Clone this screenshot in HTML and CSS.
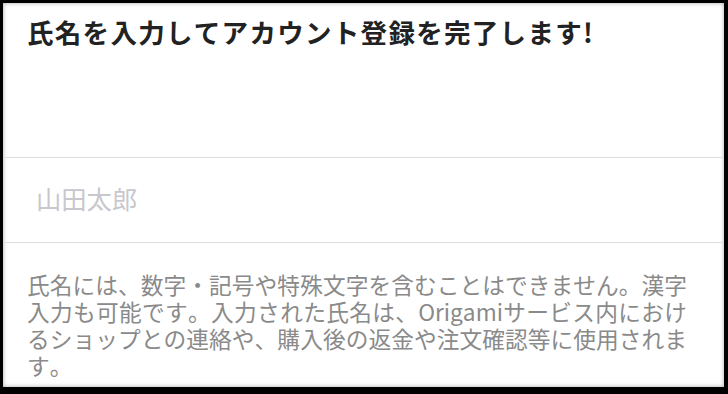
FILE: index.html
```html
<!DOCTYPE html>
<html lang="ja">
<head>
<meta charset="utf-8">
<title>氏名入力</title>
<link rel="stylesheet" href="styles.css">
</head>
<body>
<div class="panel">
  <header class="header">
    <h1 class="title">氏名を入力してアカウント登録を完了します!</h1>
  </header>
  <div class="field">
    <span class="placeholder">山田太郎</span>
  </div>
  <p class="note">氏名には、数字・記号や特殊文字を含むことはできません。漢字入力も可能です。入力された氏名は、Origamiサービス内におけるショップとの連絡や、購入後の返金や注文確認等に使用されます。</p>
</div>
</body>
</html>
```

FILE: styles.css
```css
html, body {
  margin: 0;
  padding: 0;
  background: #000;
}

body {
  width: 728px;
  height: 394px;
  overflow: hidden;
  font-family: "Noto Sans CJK JP", sans-serif;
  font-kerning: none;
}

.panel {
  margin: 3px 4px 7px 3px;
  height: 384px;
  background: #fff;
  box-shadow: inset 0 0 4px rgba(0, 0, 0, 0.35);
  display: flex;
  flex-direction: column;
}

.header {
  height: 140px;
  padding: 14px 37px 0 24px;
  border-bottom: 1px solid #dedede;
}

.title {
  margin: 0;
  font-size: 26.5px;
  line-height: 30px;
  font-weight: 700;
  letter-spacing: 1.3px;
  color: #222;
  white-space: nowrap;
}

.field {
  padding: 25px 37px 29px 33px;
  border-bottom: 1px solid #dedede;
}

.placeholder {
  display: block;
  font-size: 25.3px;
  line-height: 30px;
  color: #c7c7cd;
}

.note {
  margin: 0;
  padding: 28px 37px 0 24px;
  font-size: 22.7px;
  line-height: 27px;
  color: #8a8a8a;
  text-align: justify;
}
```
